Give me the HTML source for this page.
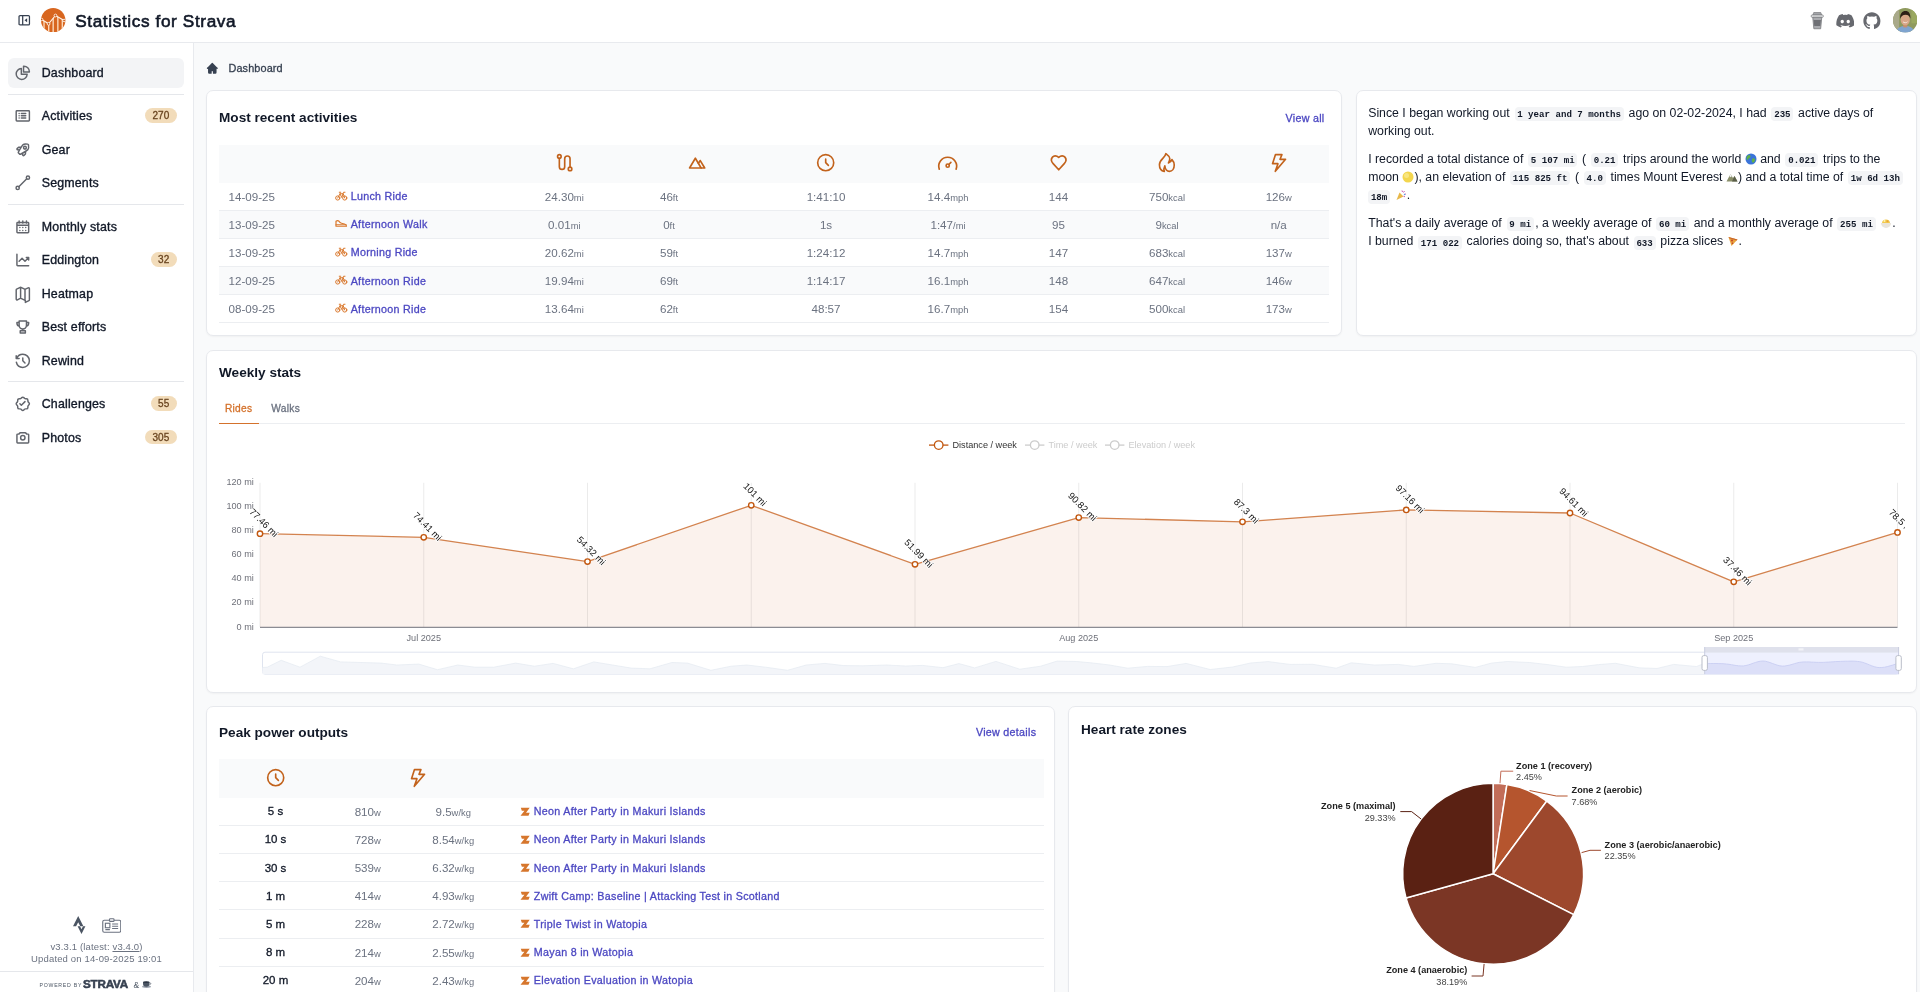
<!DOCTYPE html>
<html lang="en"><head><meta charset="utf-8"><title>Dashboard | Statistics for Strava</title>
<style>
*{box-sizing:border-box}
html,body{margin:0;padding:0}
body{will-change:transform;width:1920px;height:992px;overflow:hidden;background:#f9fafb;font-family:"Liberation Sans",sans-serif;color:#111827;position:relative;-webkit-font-smoothing:antialiased}
a{text-decoration:none;color:inherit}
.abs{position:absolute}
header{position:absolute;left:0;top:0;width:1920px;height:43px;background:#fff;border-bottom:1px solid #e8eaee}
aside{position:absolute;left:0;top:43px;width:194px;height:949px;background:#fff;border-right:1px solid #e8eaee}
.title{position:absolute;left:75.2px;top:8.6px;font-size:17.2px;letter-spacing:.62px;line-height:24px;color:#111827;white-space:nowrap;-webkit-text-stroke:.6px #111827}
.nav{position:absolute;left:8px;width:176px;height:30px;border-radius:6px;font-size:12.4px;color:#111827;line-height:30px;white-space:nowrap;-webkit-text-stroke:.35px #111827}
.nav svg{position:absolute;left:5.9px;top:6.2px;color:#62656c}
.nav .lbl{position:absolute;left:33.7px;top:0;letter-spacing:.18px}
.nav.active{background:#f3f4f6}
.badge{position:absolute;right:7.4px;top:7.2px;height:14.8px;line-height:15px;padding:0 7.4px;border-radius:8px;background:#f2dcba;color:#6a4520;font-size:10px;-webkit-text-stroke:.3px #6a4520}
.sep{position:absolute;left:8px;width:176px;height:1px;background:#e5e7eb}
.card{position:absolute;background:#fff;border:1px solid #e7e9ed;border-radius:7px;box-shadow:0 1px 2px rgba(0,0,0,.04)}
.h2{position:absolute;font-size:13.6px;font-weight:bold;color:#111827;white-space:nowrap;line-height:18px}
.link{color:#4c48c2}
.thead{position:absolute;background:#f9fafb}
.row{position:absolute;font-size:11.6px;color:#6b7280;line-height:27.2px;height:28.2px;border-bottom:1px solid #eceef1;white-space:nowrap}
.row.alt{background:#f9fafb}
.c{position:absolute;top:0;width:120px;margin-left:-60px;text-align:center}
.l{position:absolute;top:0}
.u{font-size:9.4px}
.ic{position:absolute}
.med{-webkit-text-stroke:.3px currentColor}
code{font-family:"Liberation Mono",monospace;font-weight:bold;font-size:9.12px;background:#f3f4f6;border-radius:4px;padding:1.5px 2.7px;margin:0 1.4px;color:#111827;white-space:nowrap}
.para{position:absolute;left:1368.2px;font-size:12.3px;line-height:18.3px;color:#111827;white-space:nowrap}
</style></head><body>

<header>
<svg class="abs" style="left:18.300px;top:14.300px" width="12.500" height="12.500" viewBox="0 0 24 24" fill="none" stroke="#374151" stroke-width="2.400" stroke-linejoin="round"><rect x="2" y="3" width="20" height="18" rx="2"/><path d="M9 3v18"/><path d="M17.500 8 12.500 12l5 4Z" fill="#374151" stroke="none"/></svg>
<svg class="abs" style="left:41.300px;top:8.100px" width="24.400" height="24.400" viewBox="0 0 48 48">
<defs><clipPath id="lc"><circle cx="24" cy="24" r="24"/></clipPath>
<clipPath id="lb"><path d="M-2 22.500 1.300 22.500 14.900 31.100 28.500 14.750 45.500 24.600 50 24.600V50H-2Z"/></clipPath></defs>
<circle cx="24" cy="24" r="24" fill="#d8661f"/>
<g clip-path="url(#lc)"><g clip-path="url(#lb)" fill="#fbd9bb">
<rect x="4.600" y="10" width="2.700" height="40"/><rect x="13.800" y="10" width="2.700" height="40"/><rect x="22.600" y="10" width="2.700" height="40"/><rect x="31.800" y="10" width="2.700" height="40"/><rect x="40.600" y="10" width="2.700" height="40"/>
</g>
<polyline points="1.300,22.500 14.900,31.100 28.500,14.750 45.500,24.600" fill="none" stroke="#fff3e6" stroke-width="2.300"/>
<g fill="#c9591a" stroke="#fff3e6" stroke-width="1.800"><circle cx="1.300" cy="22.500" r="2.500"/><circle cx="14.900" cy="31.100" r="2.700"/><circle cx="28.500" cy="14.750" r="2.700"/><circle cx="45.500" cy="24.600" r="2.500"/></g></g>
</svg>
<div class="title">Statistics for Strava</div>
<svg class="abs" style="left:1810px;top:11px" width="14.500" height="19" viewBox="0 0 29 38">
<path d="M7.500 3h14l2 5.500H5.500l2-5.500Z" fill="#a3a4a8" stroke="#7b7c80" stroke-width="1.400"/>
<rect x="2.500" y="8" width="24" height="4.500" rx="1.500" fill="#f6f6f7" stroke="#77787c" stroke-width="1.600"/>
<path d="M5.500 12.500h18l-2.200 23h-13.600L5.500 12.500Z" fill="#a9aaae" stroke="#77787c" stroke-width="1.600"/>
<path d="M7.200 18h14.600l-1.300 12H8.500L7.200 18Z" fill="#6f7075"/>
</svg>
<svg class="abs" style="left:1835.500px;top:14px" width="18.500" height="13.500" viewBox="0 0 24 18" fill="#67696f"><path d="M20.300 1.500A19.600 19.600 0 0 0 15.400 0c-.2.400-.5.900-.6 1.300a18.300 18.300 0 0 0-5.500 0C9.100.9 8.800.400 8.600 0A19.700 19.700 0 0 0 3.700 1.500C.600 6.100-.300 10.700.200 15.100a19.900 19.900 0 0 0 6 3c.5-.7.900-1.400 1.300-2.100-.7-.3-1.400-.6-2-1 .2-.1.300-.2.500-.4 3.900 1.800 8.200 1.800 12 0 .2.100.300.300.500.4-.6.400-1.300.7-2 1 .4.700.800 1.400 1.300 2.100a19.800 19.800 0 0 0 6-3c.6-5.200-.9-9.700-3.500-13.600ZM8 12.300c-1.200 0-2.200-1.100-2.200-2.400S6.800 7.500 8 7.500s2.200 1.100 2.200 2.400c0 1.300-1 2.400-2.200 2.400Zm8 0c-1.200 0-2.200-1.100-2.200-2.400s1-2.400 2.200-2.400 2.200 1.100 2.200 2.400c0 1.300-1 2.400-2.200 2.400Z"/></svg>
<svg class="abs" style="left:1863px;top:11.500px" width="17.800" height="17.800" viewBox="0 0 24 24" fill="#67696f"><path fill-rule="evenodd" d="M12 .5C5.650.5.500 5.650.500 12c0 5.080 3.290 9.390 7.860 10.910.570.110.790-.250.790-.550 0-.270-.010-1.170-.020-2.120-3.200.700-3.880-1.360-3.880-1.360-.520-1.330-1.280-1.680-1.280-1.680-1.040-.710.080-.700.080-.700 1.160.080 1.760 1.190 1.760 1.190 1.030 1.760 2.690 1.250 3.350.960.100-.740.400-1.250.730-1.540-2.550-.290-5.240-1.280-5.240-5.680 0-1.260.450-2.280 1.190-3.090-.120-.290-.510-1.460.110-3.040 0 0 .970-.310 3.170 1.180a11 11 0 0 1 5.760 0c2.200-1.490 3.160-1.180 3.160-1.180.630 1.580.230 2.750.110 3.040.740.810 1.190 1.830 1.190 3.090 0 4.410-2.690 5.380-5.250 5.670.410.360.780 1.060.780 2.130 0 1.540-.010 2.780-.010 3.160 0 .310.210.670.800.550A11.500 11.500 0 0 0 23.500 12C23.500 5.650 18.350.5 12 .5Z"/></svg>
<svg class="abs" style="left:1892.500px;top:8px" width="24.500" height="24.500" viewBox="0 0 48 48">
<defs><clipPath id="av"><circle cx="24" cy="24" r="24"/></clipPath></defs>
<g clip-path="url(#av)"><rect width="48" height="48" fill="#8f9a5e"/>
<rect x="0" y="0" width="12" height="48" fill="#a9a98a"/><rect x="36" y="0" width="12" height="30" fill="#9aa860"/>
<ellipse cx="24" cy="46" rx="17" ry="11" fill="#7fa4cf"/>
<rect x="20" y="28" width="8" height="10" fill="#c98f6d"/>
<ellipse cx="24" cy="23" rx="9" ry="11" fill="#d8a688"/><path d="M19.500 27c2.500 2.500 6.500 2.500 9 0" stroke="#f4e9e2" stroke-width="1.800" fill="none"/>
<path d="M14 21c-.500-10 4-15 10.500-15s10 5 9.500 15c-1.500-5.500-3.500-7.500-9.500-8-5 .5-8.500 2.500-10.500 8Z" fill="#2e1f17"/>
</g></svg>
</header>
<aside>
<a class="nav active" style="top:14.5px"><svg width="17.6" height="17.6" viewBox="0 0 24 24" overflow="visible" fill="none" stroke="currentColor" stroke-width="2" stroke-linecap="round" stroke-linejoin="round" ><path d="M10 6.025A7.5 7.5 0 1 0 17.975 14H10V6.025Z"/><path d="M13.5 3c-.169 0-.334.014-.5.025V11h7.975c.011-.166.025-.331.025-.5A7.5 7.5 0 0 0 13.5 3Z"/></svg><span class="lbl">Dashboard</span></a>
<a class="nav" style="top:58px"><svg width="17.6" height="17.6" viewBox="0 0 24 24" overflow="visible" fill="none" stroke="currentColor" stroke-width="2" stroke-linecap="round" stroke-linejoin="round" ><path d="M10 9h6m-6 3h6m-6 3h6M6.996 9h.01m-.01 3h.01m-.01 3h.01M4 5h16a1 1 0 0 1 1 1v12a1 1 0 0 1-1 1H4a1 1 0 0 1-1-1V6a1 1 0 0 1 1-1Z"/></svg><span class="lbl">Activities</span><span class="badge">270</span></a>
<a class="nav" style="top:91.5px"><svg width="17.6" height="17.6" viewBox="0 0 24 24" overflow="visible" fill="none" stroke="currentColor" stroke-width="2" stroke-linecap="round" stroke-linejoin="round" ><path d="m10.051 8.102-3.778.322-1.994 1.994a.94.94 0 0 0 .533 1.6l2.698.316m8.39 1.617-.322 3.78-1.994 1.994a.94.94 0 0 1-1.595-.533l-.4-2.652m8.166-11.174a1.366 1.366 0 0 0-1.12-1.12c-1.616-.279-4.906-.623-6.38.853-1.671 1.672-5.211 8.015-6.31 10.023a.932.932 0 0 0 .162 1.111l.828.835.833.832a.932.932 0 0 0 1.111.163c2.008-1.102 8.35-4.642 10.021-6.312 1.475-1.478 1.133-4.77.855-6.385Zm-2.961 3.722a1.88 1.88 0 1 1-3.76 0 1.88 1.88 0 0 1 3.76 0Z"/></svg><span class="lbl">Gear</span></a>
<a class="nav" style="top:125px"><svg width="17.6" height="17.6" viewBox="0 0 24 24" overflow="visible" fill="none" stroke="currentColor" stroke-width="2" stroke-linecap="round" stroke-linejoin="round" ><circle cx="5" cy="19" r="2.2"/><circle cx="19" cy="5" r="2.2"/><path d="M6.6 17.4 17.4 6.6"/></svg><span class="lbl">Segments</span></a>
<a class="nav" style="top:168.5px"><svg width="17.6" height="17.6" viewBox="0 0 24 24" overflow="visible" fill="none" stroke="currentColor" stroke-width="2" stroke-linecap="round" stroke-linejoin="round" ><path d="M4 10h16m-8-3V4M7 7V4m10 3V4M5 20h14a1 1 0 0 0 1-1V7a1 1 0 0 0-1-1H5a1 1 0 0 0-1 1v12a1 1 0 0 0 1 1Zm3-7h.01v.01H8V13Zm4 0h.01v.01H12V13Zm4 0h.01v.01H16V13Zm-8 4h.01v.01H8V17Zm4 0h.01v.01H12V17Zm4 0h.01v.01H16V17Z"/></svg><span class="lbl">Monthly stats</span></a>
<a class="nav" style="top:202px"><svg width="17.6" height="17.6" viewBox="0 0 24 24" overflow="visible" fill="none" stroke="currentColor" stroke-width="2" stroke-linecap="round" stroke-linejoin="round" ><path d="M4 4.5V19a1 1 0 0 0 1 1h15M7 14l4-4 4 4 5-5m0 0h-3.207M20 9v3.207"/></svg><span class="lbl">Eddington</span><span class="badge">32</span></a>
<a class="nav" style="top:235.5px"><svg width="17.6" height="17.6" viewBox="0 0 24 24" overflow="visible" fill="none" stroke="currentColor" stroke-width="2" stroke-linecap="round" stroke-linejoin="round" ><path d="M9 4V17.500m6-11v13.800m.503 3.498 4.875-2.437c.381-.190.622-.580.622-1.006V4.820c0-.836-.880-1.380-1.628-1.006l-3.869 1.934c-.317.159-.690.159-1.006 0L9.503 3.252a1.125 1.125 0 0 0-1.006 0L3.622 5.689C3.240 5.880 3 6.270 3 6.695V19.180c0 .836.880 1.380 1.628 1.006l3.869-1.934c.317-.159.690-.159 1.006 0l4.994 2.497c.317.158.690.158 1.006 0Z"/></svg><span class="lbl">Heatmap</span></a>
<a class="nav" style="top:269px"><svg width="17.6" height="17.6" viewBox="0 0 24 24" overflow="visible" fill="none" stroke="currentColor" stroke-width="2" stroke-linecap="round" stroke-linejoin="round" ><path d="M7 4h10v6a5 5 0 0 1-10 0V4Zm0 2H4v1a4 4 0 0 0 3.2 3.9M17 6h3v1a4 4 0 0 1-3.2 3.9M12 15v2.5M8.5 20.500h7v-3h-7v3Z"/></svg><span class="lbl">Best efforts</span></a>
<a class="nav" style="top:302.5px"><svg width="17.6" height="17.6" viewBox="0 0 24 24" overflow="visible" fill="none" stroke="currentColor" stroke-width="2" stroke-linecap="round" stroke-linejoin="round" ><path d="M12 8v4l3 3M3.223 14C4.132 18.008 7.717 21 12 21c4.97 0 9-4.03 9-9s-4.03-9-9-9c-3.729 0-6.929 2.268-8.294 5.5M7 9H3V5"/></svg><span class="lbl">Rewind</span></a>
<a class="nav" style="top:346px"><svg width="17.6" height="17.6" viewBox="0 0 24 24" overflow="visible" fill="none" stroke="currentColor" stroke-width="2" stroke-linecap="round" stroke-linejoin="round" ><path d="m8.032 12 1.984 1.984 4.96-4.96m4.55 5.272.893-.893a1.984 1.984 0 0 0 0-2.806l-.893-.893a1.984 1.984 0 0 1-.581-1.403V7.040a1.984 1.984 0 0 0-1.984-1.984h-1.262a1.983 1.983 0 0 1-1.403-.581l-.893-.893a1.984 1.984 0 0 0-2.806 0l-.893.893a1.984 1.984 0 0 1-1.403.581H7.040A1.984 1.984 0 0 0 5.055 7.040v1.262c0 .527-.209 1.031-.581 1.403l-.893.893a1.984 1.984 0 0 0 0 2.806l.893.893c.372.372.581.876.581 1.403v1.262a1.984 1.984 0 0 0 1.984 1.984h1.262c.527 0 1.031.209 1.403.581l.893.893a1.984 1.984 0 0 0 2.806 0l.893-.893a1.985 1.985 0 0 1 1.403-.581h1.262a1.984 1.984 0 0 0 1.984-1.984V15.700c0-.527.209-1.031.581-1.403Z"/></svg><span class="lbl">Challenges</span><span class="badge">55</span></a>
<a class="nav" style="top:379.5px"><svg width="17.6" height="17.6" viewBox="0 0 24 24" overflow="visible" fill="none" stroke="currentColor" stroke-width="2" stroke-linecap="round" stroke-linejoin="round" ><path d="M4 18V8a1 1 0 0 1 1-1h1.500l1.707-1.707A1 1 0 0 1 8.914 5h6.172a1 1 0 0 1 .707.293L17.500 7H19a1 1 0 0 1 1 1v10a1 1 0 0 1-1 1H5a1 1 0 0 1-1-1Z"/><path d="M15 12a3 3 0 1 1-6 0 3 3 0 0 1 6 0Z"/></svg><span class="lbl">Photos</span><span class="badge">305</span></a>
<div class="sep" style="top:50.599999999999994px"></div>
<div class="sep" style="top:160.8px"></div>
<div class="sep" style="top:338.4px"></div>
<svg class="abs" style="left:73px;top:873px" width="14" height="18" viewBox="0 0 14 18"><path d="M5.200 0 0 10.200h3.100l2.100-4 2.100 4h3.100L5.200 0Z" fill="#4b5563"/><path d="M10 10.200 8.500 13.200 7 10.200H4.600L8.500 18l3.900-7.800H10Z" fill="#4b5563"/></svg>
<svg class="abs" style="left:101.500px;top:874.5px" width="19.500" height="15" viewBox="0 0 26 20" fill="none" stroke="#6b7280" stroke-width="1.500"><rect x="1" y="3" width="24" height="16" rx="2"/><rect x="10" y="1" width="6" height="3.500" rx="1" fill="#fff"/><rect x="4.500" y="7" width="6" height="6"/><path d="M13.500 8h8m-8 3h8m-8 3h8M4.500 15.500h6"/></svg>
<div class="abs" style="left:0;width:193px;top:897.5px;text-align:center;font-size:9.5px;letter-spacing:.15px;line-height:12px;color:#6b7280;white-space:nowrap">v3.3.1 (latest: <span style="text-decoration:underline">v3.4.0</span>)<br>Updated on 14-09-2025 19:01</div>
<div class="abs" style="left:0;width:193px;top:928px;height:1px;background:#e5e7eb"></div>
<div class="abs" style="left:39.500px;top:938px;font-size:5.200px;letter-spacing:.75px;line-height:9px;color:#4b5563;white-space:nowrap">POWERED BY</div>
<div class="abs" style="left:82.500px;top:934.5px;font-size:10.800px;font-weight:bold;letter-spacing:-.2px;line-height:13px;color:#374151;white-space:nowrap;transform:scaleX(1.080);transform-origin:0 0;-webkit-text-stroke:.5px #374151">STRAVA</div>
<div class="abs" style="left:133.500px;top:935.5px;font-size:8.500px;line-height:12px;color:#4b5563">&amp;</div>
<svg class="abs" style="left:141.500px;top:937px" width="10" height="8" viewBox="0 0 20 16"><ellipse cx="9" cy="13.500" rx="9" ry="2.300" fill="#9ca3af"/><path d="M2 4h13v3a6.500 6.500 0 0 1-13 0V4Z" fill="#4b5563"/><ellipse cx="8.500" cy="4" rx="6.500" ry="1.600" fill="#1f2937"/><path d="M15 5.500c3-.5 3.500 3.500 0 4" fill="none" stroke="#4b5563" stroke-width="1.500"/></svg>
</aside>
<svg class="abs" style="left:204.900px;top:60.700px" width="14.600" height="14.600" viewBox="0 0 24 24" fill="#374151"><path fill-rule="evenodd" d="M11.293 3.293a1 1 0 0 1 1.414 0l6 6 2 2a1 1 0 0 1-1.414 1.414L19 12.414V19a2 2 0 0 1-2 2h-3a1 1 0 0 1-1-1v-3h-2v3a1 1 0 0 1-1 1H7a2 2 0 0 1-2-2v-6.586l-.293.293a1 1 0 0 1-1.414-1.414l2-2 6-6Z" clip-rule="evenodd"/></svg>
<div class="abs" style="left:228.500px;top:61px;font-size:10.900px;line-height:14px;color:#374151;letter-spacing:.1px;-webkit-text-stroke:.3px #374151">Dashboard</div>
<div class="card" style="left:206.25px;top:90px;width:1135.75px;height:246.25px"></div>
<div class="h2" style="left:219px;top:108.500px">Most recent activities</div>
<div class="abs link med" style="left:1285.500px;top:110.600px;font-size:10.700px;letter-spacing:.3px;line-height:14px;white-space:nowrap">View all</div>
<div class="thead" style="left:218.75px;top:145px;width:1110.5px;height:37.500px"></div>
<span class="ic" style="left:553.5999999999999px;top:152.3px;color:#c2621b"><svg width="21.4" height="21.4" viewBox="0 0 24 24" overflow="visible" fill="none" stroke="currentColor" stroke-width="1.85" stroke-linecap="round" stroke-linejoin="round" ><circle cx="6" cy="5" r="2"/><circle cx="18" cy="19" r="2"/><path d="M6 7v9.500a3 3 0 0 0 6 0v-9a3 3 0 0 1 6 0V17"/></svg></span>
<span class="ic" style="left:686.3px;top:152.3px;color:#c2621b"><svg width="21.4" height="21.4" viewBox="0 0 24 24" overflow="visible" fill="none" stroke="currentColor" stroke-width="1.85" stroke-linecap="round" stroke-linejoin="round" ><path d="M4 18 10.500 7 17 18Z"/><path d="M13.900 12.700 16 9.600 21 18h-4"/></svg></span>
<span class="ic" style="left:815.3px;top:152.3px;color:#c2621b"><svg width="21.4" height="21.4" viewBox="0 0 24 24" overflow="visible" fill="none" stroke="currentColor" stroke-width="1.85" stroke-linecap="round" stroke-linejoin="round" ><path d="M12 8v4l3 3m6-3a9 9 0 1 1-18 0 9 9 0 0 1 18 0Z"/></svg></span>
<span class="ic" style="left:937.3px;top:152.3px;color:#c2621b"><svg width="21.4" height="21.4" viewBox="0 0 24 24" overflow="visible" fill="none" stroke="currentColor" stroke-width="1.85" stroke-linecap="round" stroke-linejoin="round" ><path d="M2.550 19.200A10 10 0 1 1 21.450 19.200"/><circle cx="12" cy="15.300" r="1.800"/><path d="M13.300 14 15.600 11.700"/></svg></span>
<span class="ic" style="left:1047.8px;top:152.3px;color:#c2621b"><svg width="21.4" height="21.4" viewBox="0 0 24 24" overflow="visible" fill="none" stroke="currentColor" stroke-width="1.85" stroke-linecap="round" stroke-linejoin="round" ><path d="M12.010 6.001C6.500 1 1 8 5.782 13.001L12.011 20l6.230-7C23 8 17.500 1 12.010 6.002Z"/></svg></span>
<span class="ic" style="left:1156.3px;top:152.3px;color:#c2621b"><svg width="21.4" height="21.4" viewBox="0 0 24 24" overflow="visible" fill="none" stroke="currentColor" stroke-width="1.85" stroke-linecap="round" stroke-linejoin="round" ><path d="M11.050 1.900C12.500 3 15.200 4.800 15.450 7.300C15.600 9.500 14.600 11 14 12.250C15.800 11.800 17.300 10.400 17.900 8.500C19.500 10.200 20.450 12 20.450 14.500C20.450 18.800 18.300 21.800 15 21.800C12.500 21.800 10.200 19.300 9.900 15.600C8.900 17.500 8.700 19.800 9.300 21.900C5.800 21 3.850 18.300 3.850 14.200C3.850 10.800 6 8.800 7.900 6.900C9.400 5.400 10.600 3.800 11.050 1.900Z"/></svg></span>
<span class="ic" style="left:1268.0px;top:152.3px;color:#c2621b"><svg width="21.4" height="21.4" viewBox="0 0 24 24" overflow="visible" fill="none" stroke="currentColor" stroke-width="1.85" stroke-linecap="round" stroke-linejoin="round" ><path d="M8.400 2.900h7.200l-2.100 5.300h6.200L8.200 21.600l3-8.500H5.100Z"/></svg></span>
<div class="row" style="left:218.75px;top:182.60px;width:1110.5px"><span class="l" style="left:9.75px">14-09-25</span><svg class="abs" style="left:116.25px;top:8.3px" width="12.500" height="10" viewBox="0 0 25 20" fill="none" stroke="#d9782d" stroke-width="2" stroke-linecap="round" stroke-linejoin="round"><circle cx="5.500" cy="14" r="4.200"/><circle cx="19.500" cy="14" r="4.200"/><path d="M5.500 14 10 5.500h6.500L19.500 14M8.500 2.500h3M10 5.500 13.500 13 17 2.500h3"/></svg><span class="l link med" style="left:131.95px;top:.6px;font-size:10.700px;letter-spacing:.3px">Lunch Ride</span><span class="c" style="left:345.54999999999995px">24.30<span class="u">mi</span></span><span class="c" style="left:450.25px">46<span class="u">ft</span></span><span class="c" style="left:607.25px">1:41:10</span><span class="c" style="left:729.25px">14.4<span class="u">mph</span></span><span class="c" style="left:839.75px">144</span><span class="c" style="left:948.25px">750<span class="u">kcal</span></span><span class="c" style="left:1059.95px">126<span class="u">w</span></span></div>
<div class="row alt" style="left:218.75px;top:210.75px;width:1110.5px"><span class="l" style="left:9.75px">13-09-25</span><svg class="abs" style="left:116.25px;top:8.3px" width="12.500" height="10" viewBox="0 0 25 20" fill="none" stroke="#d9782d" stroke-width="2.400" stroke-linecap="round" stroke-linejoin="round"><path d="M2 4.500c2-1.500 4.500-1.500 6 0 1 2 2.500 3.500 5 4l6 1.500c2.500.600 4 2 4 4.500H2V4.500Z"/><path d="M2 11.500h20"/></svg><span class="l link med" style="left:131.95px;top:.6px;font-size:10.700px;letter-spacing:.3px">Afternoon Walk</span><span class="c" style="left:345.54999999999995px">0.01<span class="u">mi</span></span><span class="c" style="left:450.25px">0<span class="u">ft</span></span><span class="c" style="left:607.25px">1s</span><span class="c" style="left:729.25px">1:47<span class="u">/mi</span></span><span class="c" style="left:839.75px">95</span><span class="c" style="left:948.25px">9<span class="u">kcal</span></span><span class="c" style="left:1059.95px">n/a</span></div>
<div class="row" style="left:218.75px;top:238.90px;width:1110.5px"><span class="l" style="left:9.75px">13-09-25</span><svg class="abs" style="left:116.25px;top:8.3px" width="12.500" height="10" viewBox="0 0 25 20" fill="none" stroke="#d9782d" stroke-width="2" stroke-linecap="round" stroke-linejoin="round"><circle cx="5.500" cy="14" r="4.200"/><circle cx="19.500" cy="14" r="4.200"/><path d="M5.500 14 10 5.500h6.500L19.500 14M8.500 2.500h3M10 5.500 13.500 13 17 2.500h3"/></svg><span class="l link med" style="left:131.95px;top:.6px;font-size:10.700px;letter-spacing:.3px">Morning Ride</span><span class="c" style="left:345.54999999999995px">20.62<span class="u">mi</span></span><span class="c" style="left:450.25px">59<span class="u">ft</span></span><span class="c" style="left:607.25px">1:24:12</span><span class="c" style="left:729.25px">14.7<span class="u">mph</span></span><span class="c" style="left:839.75px">147</span><span class="c" style="left:948.25px">683<span class="u">kcal</span></span><span class="c" style="left:1059.95px">137<span class="u">w</span></span></div>
<div class="row alt" style="left:218.75px;top:267.05px;width:1110.5px"><span class="l" style="left:9.75px">12-09-25</span><svg class="abs" style="left:116.25px;top:8.3px" width="12.500" height="10" viewBox="0 0 25 20" fill="none" stroke="#d9782d" stroke-width="2" stroke-linecap="round" stroke-linejoin="round"><circle cx="5.500" cy="14" r="4.200"/><circle cx="19.500" cy="14" r="4.200"/><path d="M5.500 14 10 5.500h6.500L19.500 14M8.500 2.500h3M10 5.500 13.500 13 17 2.500h3"/></svg><span class="l link med" style="left:131.95px;top:.6px;font-size:10.700px;letter-spacing:.3px">Afternoon Ride</span><span class="c" style="left:345.54999999999995px">19.94<span class="u">mi</span></span><span class="c" style="left:450.25px">69<span class="u">ft</span></span><span class="c" style="left:607.25px">1:14:17</span><span class="c" style="left:729.25px">16.1<span class="u">mph</span></span><span class="c" style="left:839.75px">148</span><span class="c" style="left:948.25px">647<span class="u">kcal</span></span><span class="c" style="left:1059.95px">146<span class="u">w</span></span></div>
<div class="row" style="left:218.75px;top:295.20px;width:1110.5px"><span class="l" style="left:9.75px">08-09-25</span><svg class="abs" style="left:116.25px;top:8.3px" width="12.500" height="10" viewBox="0 0 25 20" fill="none" stroke="#d9782d" stroke-width="2" stroke-linecap="round" stroke-linejoin="round"><circle cx="5.500" cy="14" r="4.200"/><circle cx="19.500" cy="14" r="4.200"/><path d="M5.500 14 10 5.500h6.500L19.500 14M8.500 2.500h3M10 5.500 13.500 13 17 2.500h3"/></svg><span class="l link med" style="left:131.95px;top:.6px;font-size:10.700px;letter-spacing:.3px">Afternoon Ride</span><span class="c" style="left:345.54999999999995px">13.64<span class="u">mi</span></span><span class="c" style="left:450.25px">62<span class="u">ft</span></span><span class="c" style="left:607.25px">48:57</span><span class="c" style="left:729.25px">16.7<span class="u">mph</span></span><span class="c" style="left:839.75px">154</span><span class="c" style="left:948.25px">500<span class="u">kcal</span></span><span class="c" style="left:1059.95px">173<span class="u">w</span></span></div>
<div class="card" style="left:1355.5px;top:90px;width:561.5px;height:246.25px"></div>
<div class="para" style="top:103.8px">Since I began working out <code>1 year and 7 months</code> ago on 02-02-2024, I had <code>235</code> active days of</div>
<div class="para" style="top:122.1px">working out.</div>
<div class="para" style="top:149.9px">I recorded a total distance of <code>5 107 mi</code> ( <code>0.21</code> trips around the world <svg style="vertical-align:-2px" width="12" height="12" viewBox="0 0 24 24"><circle cx="12" cy="12" r="11" fill="#3b74d9"/><path d="M6 5c3-2 6 0 5 3s-4 2-5 5-3 0-3-3 1-4 3-5Zm9 6c3-1 6 1 5 4s-3 5-5 4-2-7 0-8Z" fill="#5fb04a"/></svg> and <code>0.021</code> trips to the</div>
<div class="para" style="top:167.7px">moon <svg style="vertical-align:-2px" width="12" height="12" viewBox="0 0 24 24"><circle cx="12" cy="12" r="11" fill="#f3d64e"/><circle cx="9" cy="9" r="5" fill="#f9e98c" opacity=".8"/></svg>), an elevation of <code>115 825 ft</code> ( <code>4.0</code> times Mount Everest <svg style="vertical-align:-2px" width="12" height="12" viewBox="0 0 24 24"><path d="M1 21 9 6l5 8 3-4 6 11Z" fill="#8a8f6a"/><path d="M9 6l2.500 4.500-2.500 2-2.300-2.300Z" fill="#f3f4f6"/><path d="M12 21l5-11 6 11Z" fill="#5b5f4a"/></svg>) and a total time of <code>1w 6d 13h</code></div>
<div class="para" style="top:186.0px"><code style="margin-left:0">18m</code> <svg style="vertical-align:-2px" width="12" height="12" viewBox="0 0 24 24"><path d="M3 22 9 7l8 8Z" fill="#e8b84a"/><path d="M14 3l1 3m4-2-2 3m5 3-3 .5m1 5-3-1" stroke="#c95fb0" stroke-width="2" fill="none"/><circle cx="19" cy="11" r="1.300" fill="#4aa3e8"/></svg>.</div>
<div class="para" style="top:213.8px">That's a daily average of <code>9 mi</code>, a weekly average of <code>60 mi</code> and a monthly average of <code>255 mi</code> <svg style="vertical-align:-2px" width="12" height="12" viewBox="0 0 24 24"><path d="M2 12h20a10 10 0 0 1-20 0Z" fill="#e9e4da"/><path d="M4 12c0-5 4-7 8-7s8 2 8 7Z" fill="#f2c94c"/><circle cx="9" cy="8" r="2" fill="#fff3b0"/><circle cx="15" cy="8.500" r="2" fill="#e8a23a"/></svg>.</div>
<div class="para" style="top:232.2px">I burned <code>171 022</code> calories doing so, that's about <code>633</code> pizza slices <svg style="vertical-align:-2px" width="12" height="12" viewBox="0 0 24 24"><path d="M3 4 21 9 9 22Z" fill="#e9a23b"/><path d="M3 4 21 9l-1.500 2L4.500 6.500Z" fill="#c7652c"/><circle cx="10" cy="11" r="1.800" fill="#c0392b"/><circle cx="11" cy="16.500" r="1.500" fill="#c0392b"/></svg>.</div>
<div class="card" style="left:206.25px;top:350px;width:1710.75px;height:343px"></div>
<div class="h2" style="left:219px;top:364px">Weekly stats</div>
<div class="abs" style="left:218.75px;top:423.300px;width:1685.75px;height:1px;background:#eceef1"></div>
<div class="abs" style="left:218.75px;top:422.500px;width:40px;height:1.800px;background:#d4722c"></div>
<div class="abs med" style="left:224.900px;top:402.200px;font-size:10.200px;letter-spacing:.28px;line-height:14px;color:#d4722c">Rides</div>
<div class="abs med" style="left:271.300px;top:402.200px;font-size:10.200px;letter-spacing:.28px;line-height:14px;color:#6b7280">Walks</div>
<svg class="abs" style="left:0;top:0;overflow:visible" width="1920" height="992" viewBox="0 0 1920 992" font-family="Liberation Sans, sans-serif">
<path d="M929 445.100h19.400" stroke="#c2570f" stroke-width="1.300"/><circle cx="938.7" cy="445.100" r="4.300" fill="#fff" stroke="#c2570f" stroke-width="1.300"/><text x="952.5" y="448.400" font-size="9.150" fill="#333">Distance / week</text>
<path d="M1025 445.100h19.400" stroke="#ccc" stroke-width="1.300"/><circle cx="1034.7" cy="445.100" r="4.300" fill="#fff" stroke="#ccc" stroke-width="1.300"/><text x="1048.5" y="448.400" font-size="9.150" fill="#ccc">Time / week</text>
<path d="M1105 445.100h19.400" stroke="#ccc" stroke-width="1.300"/><circle cx="1114.7" cy="445.100" r="4.300" fill="#fff" stroke="#ccc" stroke-width="1.300"/><text x="1128.5" y="448.400" font-size="9.150" fill="#ccc">Elevation / week</text>
<text x="253.800" y="629.5" font-size="9.150" fill="#6E7079" text-anchor="end">0 mi</text>
<text x="253.800" y="605.4" font-size="9.150" fill="#6E7079" text-anchor="end">20 mi</text>
<text x="253.800" y="581.3" font-size="9.150" fill="#6E7079" text-anchor="end">40 mi</text>
<text x="253.800" y="557.2" font-size="9.150" fill="#6E7079" text-anchor="end">60 mi</text>
<text x="253.800" y="533.1" font-size="9.150" fill="#6E7079" text-anchor="end">80 mi</text>
<text x="253.800" y="509.0" font-size="9.150" fill="#6E7079" text-anchor="end">100 mi</text>
<text x="253.800" y="484.9" font-size="9.150" fill="#6E7079" text-anchor="end">120 mi</text>
<polygon points="260.0,627.0 260.00,533.66 423.75,537.34 587.50,561.54 751.25,505.29 915.00,564.35 1078.75,517.56 1242.50,521.80 1406.25,509.92 1570.00,512.99 1733.75,581.86 1897.50,532.41 1897.50,627.0" fill="#fbf2ed"/>
<path d="M260.00 482.800V627.0" stroke="#000" stroke-opacity=".08" stroke-width="1"/>
<path d="M423.75 482.800V627.0" stroke="#000" stroke-opacity=".08" stroke-width="1"/>
<path d="M587.50 482.800V627.0" stroke="#000" stroke-opacity=".08" stroke-width="1"/>
<path d="M751.25 482.800V627.0" stroke="#000" stroke-opacity=".08" stroke-width="1"/>
<path d="M915.00 482.800V627.0" stroke="#000" stroke-opacity=".08" stroke-width="1"/>
<path d="M1078.75 482.800V627.0" stroke="#000" stroke-opacity=".08" stroke-width="1"/>
<path d="M1242.50 482.800V627.0" stroke="#000" stroke-opacity=".08" stroke-width="1"/>
<path d="M1406.25 482.800V627.0" stroke="#000" stroke-opacity=".08" stroke-width="1"/>
<path d="M1570.00 482.800V627.0" stroke="#000" stroke-opacity=".08" stroke-width="1"/>
<path d="M1733.75 482.800V627.0" stroke="#000" stroke-opacity=".08" stroke-width="1"/>
<path d="M1897.50 482.800V627.0" stroke="#000" stroke-opacity=".08" stroke-width="1"/>
<polyline points="260.00,533.66 423.75,537.34 587.50,561.54 751.25,505.29 915.00,564.35 1078.75,517.56 1242.50,521.80 1406.25,509.92 1570.00,512.99 1733.75,581.86 1897.50,532.41" fill="none" stroke="#d3834f" stroke-width="1.300" stroke-linejoin="round"/>
<path d="M260.0 627.3H1897.50" stroke="#6E7079" stroke-width="1"/>
<text x="423.75" y="640.900" font-size="9.150" fill="#6E7079" text-anchor="middle">Jul 2025</text>
<text x="1078.75" y="640.900" font-size="9.150" fill="#6E7079" text-anchor="middle">Aug 2025</text>
<text x="1733.75" y="640.900" font-size="9.150" fill="#6E7079" text-anchor="middle">Sep 2025</text>
<defs><clipPath id="cclip"><rect x="206" y="430" width="1698.800" height="260"/></clipPath></defs><g clip-path="url(#cclip)">
<circle cx="260.00" cy="533.66" r="2.700" fill="#fff" stroke="#c2570f" stroke-width="1.400"/>
<circle cx="423.75" cy="537.34" r="2.700" fill="#fff" stroke="#c2570f" stroke-width="1.400"/>
<circle cx="587.50" cy="561.54" r="2.700" fill="#fff" stroke="#c2570f" stroke-width="1.400"/>
<circle cx="751.25" cy="505.29" r="2.700" fill="#fff" stroke="#c2570f" stroke-width="1.400"/>
<circle cx="915.00" cy="564.35" r="2.700" fill="#fff" stroke="#c2570f" stroke-width="1.400"/>
<circle cx="1078.75" cy="517.56" r="2.700" fill="#fff" stroke="#c2570f" stroke-width="1.400"/>
<circle cx="1242.50" cy="521.80" r="2.700" fill="#fff" stroke="#c2570f" stroke-width="1.400"/>
<circle cx="1406.25" cy="509.92" r="2.700" fill="#fff" stroke="#c2570f" stroke-width="1.400"/>
<circle cx="1570.00" cy="512.99" r="2.700" fill="#fff" stroke="#c2570f" stroke-width="1.400"/>
<circle cx="1733.75" cy="581.86" r="2.700" fill="#fff" stroke="#c2570f" stroke-width="1.400"/>
<circle cx="1897.50" cy="532.41" r="2.700" fill="#fff" stroke="#c2570f" stroke-width="1.400"/>
<text transform="translate(260.00 526.66) rotate(45)" y="-2.200" font-size="9.400" fill="#111" text-anchor="middle" stroke="#fff" stroke-width="1.600" stroke-linejoin="round" paint-order="stroke">77.46 mi</text>
<text transform="translate(423.75 530.34) rotate(45)" y="-2.200" font-size="9.400" fill="#111" text-anchor="middle" stroke="#fff" stroke-width="1.600" stroke-linejoin="round" paint-order="stroke">74.41 mi</text>
<text transform="translate(587.50 554.54) rotate(45)" y="-2.200" font-size="9.400" fill="#111" text-anchor="middle" stroke="#fff" stroke-width="1.600" stroke-linejoin="round" paint-order="stroke">54.32 mi</text>
<text transform="translate(751.25 498.29) rotate(45)" y="-2.200" font-size="9.400" fill="#111" text-anchor="middle" stroke="#fff" stroke-width="1.600" stroke-linejoin="round" paint-order="stroke">101 mi</text>
<text transform="translate(915.00 557.35) rotate(45)" y="-2.200" font-size="9.400" fill="#111" text-anchor="middle" stroke="#fff" stroke-width="1.600" stroke-linejoin="round" paint-order="stroke">51.99 mi</text>
<text transform="translate(1078.75 510.56) rotate(45)" y="-2.200" font-size="9.400" fill="#111" text-anchor="middle" stroke="#fff" stroke-width="1.600" stroke-linejoin="round" paint-order="stroke">90.82 mi</text>
<text transform="translate(1242.50 514.80) rotate(45)" y="-2.200" font-size="9.400" fill="#111" text-anchor="middle" stroke="#fff" stroke-width="1.600" stroke-linejoin="round" paint-order="stroke">87.3 mi</text>
<text transform="translate(1406.25 502.92) rotate(45)" y="-2.200" font-size="9.400" fill="#111" text-anchor="middle" stroke="#fff" stroke-width="1.600" stroke-linejoin="round" paint-order="stroke">97.16 mi</text>
<text transform="translate(1570.00 505.99) rotate(45)" y="-2.200" font-size="9.400" fill="#111" text-anchor="middle" stroke="#fff" stroke-width="1.600" stroke-linejoin="round" paint-order="stroke">94.61 mi</text>
<text transform="translate(1733.75 574.86) rotate(45)" y="-2.200" font-size="9.400" fill="#111" text-anchor="middle" stroke="#fff" stroke-width="1.600" stroke-linejoin="round" paint-order="stroke">37.46 mi</text>
<text transform="translate(1897.50 525.41) rotate(45)" y="-2.200" font-size="9.400" fill="#111" text-anchor="middle" stroke="#fff" stroke-width="1.600" stroke-linejoin="round" paint-order="stroke">78.5 mi</text>
</g>
<rect x="262.5" y="652.2" width="1636.1" height="22.0" rx="2.500" fill="#fff" stroke="#dfe4ef" stroke-width="1"/>
<polygon points="262.5,674.2 262.5,667.5 267.2,667.2 281.2,660.3 300.0,667.2 320.3,656.2 340.6,661.9 381.2,663.1 396.9,665.0 418.8,664.1 437.5,669.7 457.8,665.0 475.0,667.2 493.8,667.2 515.6,663.1 534.4,666.2 553.1,663.4 573.4,668.8 593.8,661.9 612.5,665.0 631.2,668.1 650.0,668.8 671.9,662.5 687.5,663.1 710.9,670.3 731.2,666.2 746.9,665.0 765.6,667.2 787.5,670.3 806.2,665.0 825.0,663.4 843.8,665.6 862.8,665.8 886.1,665.0 905.7,666.0 922.4,665.4 943.0,667.7 958.9,663.6 974.7,667.9 995.9,661.4 1019.8,669.2 1040.7,666.2 1057.1,661.1 1076.8,661.5 1093.6,663.1 1108.8,664.9 1127.8,668.2 1147.5,666.4 1167.0,666.6 1186.1,663.4 1210.1,669.5 1232.6,667.0 1250.5,663.0 1268.1,661.6 1290.0,664.4 1312.6,664.3 1336.2,668.2 1351.2,662.8 1374.4,665.0 1398.2,664.4 1413.9,666.4 1435.9,663.3 1451.7,663.8 1475.3,667.4 1491.4,663.1 1507.3,661.5 1529.5,662.5 1549.5,664.8 1566.2,667.2 1582.4,666.5 1598.5,664.6 1615.4,663.3 1639.1,667.8 1656.9,668.5 1673.7,664.4 1696.4,666.5 1704.7,663.4 1724.1,663.8 1743.5,665.9 1762.9,661.0 1782.3,666.1 1801.7,662.1 1821.0,662.4 1840.4,661.4 1859.8,661.7 1879.2,667.6 1898.6,663.3 1898.6,674.2" fill="#f3f5f9"/>
<polyline points="262.5,667.5 267.2,667.2 281.2,660.3 300.0,667.2 320.3,656.2 340.6,661.9 381.2,663.1 396.9,665.0 418.8,664.1 437.5,669.7 457.8,665.0 475.0,667.2 493.8,667.2 515.6,663.1 534.4,666.2 553.1,663.4 573.4,668.8 593.8,661.9 612.5,665.0 631.2,668.1 650.0,668.8 671.9,662.5 687.5,663.1 710.9,670.3 731.2,666.2 746.9,665.0 765.6,667.2 787.5,670.3 806.2,665.0 825.0,663.4 843.8,665.6 862.8,665.8 886.1,665.0 905.7,666.0 922.4,665.4 943.0,667.7 958.9,663.6 974.7,667.9 995.9,661.4 1019.8,669.2 1040.7,666.2 1057.1,661.1 1076.8,661.5 1093.6,663.1 1108.8,664.9 1127.8,668.2 1147.5,666.4 1167.0,666.6 1186.1,663.4 1210.1,669.5 1232.6,667.0 1250.5,663.0 1268.1,661.6 1290.0,664.4 1312.6,664.3 1336.2,668.2 1351.2,662.8 1374.4,665.0 1398.2,664.4 1413.9,666.4 1435.9,663.3 1451.7,663.8 1475.3,667.4 1491.4,663.1 1507.3,661.5 1529.5,662.5 1549.5,664.8 1566.2,667.2 1582.4,666.5 1598.5,664.6 1615.4,663.3 1639.1,667.8 1656.9,668.5 1673.7,664.4 1696.4,666.5 1704.7,663.4 1724.1,663.8 1743.5,665.9 1762.9,661.0 1782.3,666.1 1801.7,662.1 1821.0,662.4 1840.4,661.4 1859.8,661.7 1879.2,667.6 1898.6,663.3" fill="none" stroke="#e4e9f1" stroke-width=".7"/>
<rect x="1704.7" y="652.2" width="193.89999999999986" height="22.0" fill="#eef0fe"/>
<polygon points="1704.7,674.2 1704.7,663.4 1706.2,663.5 1708.2,663.5 1710.6,663.5 1713.2,663.5 1716.0,663.5 1718.8,663.6 1721.5,663.6 1724.1,663.8 1726.5,664.0 1728.9,664.3 1731.4,664.7 1733.8,665.1 1736.2,665.5 1738.6,665.8 1741.1,665.9 1743.5,665.9 1745.9,665.5 1748.3,664.9 1750.8,664.1 1753.2,663.2 1755.6,662.4 1758.0,661.7 1760.4,661.2 1762.9,661.0 1765.3,661.2 1767.7,661.8 1770.1,662.6 1772.6,663.5 1775.0,664.4 1777.4,665.2 1779.8,665.8 1782.3,666.1 1784.7,666.0 1787.1,665.6 1789.5,665.1 1792.0,664.4 1794.4,663.7 1796.8,663.0 1799.2,662.4 1801.7,662.1 1804.1,661.9 1806.5,661.9 1808.9,661.9 1811.3,662.1 1813.8,662.2 1816.2,662.3 1818.6,662.4 1821.0,662.4 1823.5,662.4 1825.9,662.2 1828.3,662.1 1830.7,661.9 1833.2,661.8 1835.6,661.6 1838.0,661.5 1840.4,661.4 1842.9,661.3 1845.3,661.2 1847.7,661.2 1850.1,661.1 1852.5,661.1 1855.0,661.2 1857.4,661.4 1859.8,661.7 1862.2,662.2 1864.7,663.0 1867.1,663.9 1869.5,664.9 1871.9,665.9 1874.4,666.7 1876.8,667.3 1879.2,667.6 1881.8,667.5 1884.5,667.2 1887.3,666.6 1890.1,665.8 1892.7,665.1 1895.1,664.3 1897.1,663.7 1898.6,663.3 1898.6,674.2" fill="#dcdff8"/>
<polyline points="1704.7,663.4 1706.2,663.5 1708.2,663.5 1710.6,663.5 1713.2,663.5 1716.0,663.5 1718.8,663.6 1721.5,663.6 1724.1,663.8 1726.5,664.0 1728.9,664.3 1731.4,664.7 1733.8,665.1 1736.2,665.5 1738.6,665.8 1741.1,665.9 1743.5,665.9 1745.9,665.5 1748.3,664.9 1750.8,664.1 1753.2,663.2 1755.6,662.4 1758.0,661.7 1760.4,661.2 1762.9,661.0 1765.3,661.2 1767.7,661.8 1770.1,662.6 1772.6,663.5 1775.0,664.4 1777.4,665.2 1779.8,665.8 1782.3,666.1 1784.7,666.0 1787.1,665.6 1789.5,665.1 1792.0,664.4 1794.4,663.7 1796.8,663.0 1799.2,662.4 1801.7,662.1 1804.1,661.9 1806.5,661.9 1808.9,661.9 1811.3,662.1 1813.8,662.2 1816.2,662.3 1818.6,662.4 1821.0,662.4 1823.5,662.4 1825.9,662.2 1828.3,662.1 1830.7,661.9 1833.2,661.8 1835.6,661.6 1838.0,661.5 1840.4,661.4 1842.9,661.3 1845.3,661.2 1847.7,661.2 1850.1,661.1 1852.5,661.1 1855.0,661.2 1857.4,661.4 1859.8,661.7 1862.2,662.2 1864.7,663.0 1867.1,663.9 1869.5,664.9 1871.9,665.9 1874.4,666.7 1876.8,667.3 1879.2,667.6 1881.8,667.5 1884.5,667.2 1887.3,666.6 1890.1,665.8 1892.7,665.1 1895.1,664.3 1897.1,663.7 1898.6,663.3" fill="none" stroke="#c5caf1" stroke-width=".8"/>
<rect x="1704.7" y="647" width="193.89999999999986" height="5.500" fill="#dfe1ec"/>
<rect x="1798.500" y="648.300" width="5" height="2.200" fill="#f1f2f7"/>
<path d="M1704.7 647V674.2M1898.6 647V674.2" stroke="#c9cde0" stroke-width="1"/>
<rect x="1702.0" y="655.600" width="5.400" height="14.800" rx="1.800" fill="#fff" stroke="#b9bdc9" stroke-width="1"/>
<rect x="1895.8999999999999" y="655.600" width="5.400" height="14.800" rx="1.800" fill="#fff" stroke="#b9bdc9" stroke-width="1"/>
</svg>
<div class="card" style="left:206.25px;top:706.25px;width:848.75px;height:320px"></div>
<div class="h2" style="left:219px;top:723.500px">Peak power outputs</div>
<div class="abs link med" style="left:975.900px;top:725.300px;font-size:10.700px;letter-spacing:.3px;line-height:14px;white-space:nowrap">View details</div>
<div class="thead" style="left:218.75px;top:759px;width:825.25px;height:38.500px"></div>
<span class="ic" style="left:264.7px;top:767.3px;color:#c2621b"><svg width="21.4" height="21.4" viewBox="0 0 24 24" overflow="visible" fill="none" stroke="currentColor" stroke-width="1.85" stroke-linecap="round" stroke-linejoin="round" ><path d="M12 8v4l3 3m6-3a9 9 0 1 1-18 0 9 9 0 0 1 18 0Z"/></svg></span>
<span class="ic" style="left:406.8px;top:767.3px;color:#c2621b"><svg width="21.4" height="21.4" viewBox="0 0 24 24" overflow="visible" fill="none" stroke="currentColor" stroke-width="1.85" stroke-linecap="round" stroke-linejoin="round" ><path d="M8.400 2.900h7.200l-2.100 5.300h6.200L8.200 21.600l3-8.500H5.100Z"/></svg></span>
<div class="row" style="left:218.75px;top:797.60px;width:825.25px"><span class="c med" style="left:56.75px;top:.7px;color:#111827;font-size:11.500px">5 s</span><span class="c" style="left:148.95px">810<span class="u">w</span></span><span class="c" style="left:234.45px">9.5<span class="u">w/kg</span></span><svg class="abs" style="left:301.54999999999995px;top:9.1px" width="10.500" height="9.400" viewBox="0 0 20 20" preserveAspectRatio="none"><path d="M1.500 1.500h17L11.500 12h7l-2.300 6.500H1L8.500 8H3.500L1.500 1.500Z" fill="#d6762c"/></svg><span class="l link med" style="left:315.04999999999995px;top:.6px;font-size:10.700px;letter-spacing:.3px">Neon After Party in Makuri Islands</span></div>
<div class="row" style="left:218.75px;top:825.80px;width:825.25px"><span class="c med" style="left:56.75px;top:.7px;color:#111827;font-size:11.500px">10 s</span><span class="c" style="left:148.95px">728<span class="u">w</span></span><span class="c" style="left:234.45px">8.54<span class="u">w/kg</span></span><svg class="abs" style="left:301.54999999999995px;top:9.1px" width="10.500" height="9.400" viewBox="0 0 20 20" preserveAspectRatio="none"><path d="M1.500 1.500h17L11.500 12h7l-2.300 6.500H1L8.500 8H3.500L1.500 1.500Z" fill="#d6762c"/></svg><span class="l link med" style="left:315.04999999999995px;top:.6px;font-size:10.700px;letter-spacing:.3px">Neon After Party in Makuri Islands</span></div>
<div class="row" style="left:218.75px;top:854.00px;width:825.25px"><span class="c med" style="left:56.75px;top:.7px;color:#111827;font-size:11.500px">30 s</span><span class="c" style="left:148.95px">539<span class="u">w</span></span><span class="c" style="left:234.45px">6.32<span class="u">w/kg</span></span><svg class="abs" style="left:301.54999999999995px;top:9.1px" width="10.500" height="9.400" viewBox="0 0 20 20" preserveAspectRatio="none"><path d="M1.500 1.500h17L11.500 12h7l-2.300 6.500H1L8.500 8H3.500L1.500 1.500Z" fill="#d6762c"/></svg><span class="l link med" style="left:315.04999999999995px;top:.6px;font-size:10.700px;letter-spacing:.3px">Neon After Party in Makuri Islands</span></div>
<div class="row" style="left:218.75px;top:882.20px;width:825.25px"><span class="c med" style="left:56.75px;top:.7px;color:#111827;font-size:11.500px">1 m</span><span class="c" style="left:148.95px">414<span class="u">w</span></span><span class="c" style="left:234.45px">4.93<span class="u">w/kg</span></span><svg class="abs" style="left:301.54999999999995px;top:9.1px" width="10.500" height="9.400" viewBox="0 0 20 20" preserveAspectRatio="none"><path d="M1.500 1.500h17L11.500 12h7l-2.300 6.500H1L8.500 8H3.500L1.500 1.500Z" fill="#d6762c"/></svg><span class="l link med" style="left:315.04999999999995px;top:.6px;font-size:10.700px;letter-spacing:.3px">Zwift Camp: Baseline | Attacking Test in Scotland</span></div>
<div class="row" style="left:218.75px;top:910.40px;width:825.25px"><span class="c med" style="left:56.75px;top:.7px;color:#111827;font-size:11.500px">5 m</span><span class="c" style="left:148.95px">228<span class="u">w</span></span><span class="c" style="left:234.45px">2.72<span class="u">w/kg</span></span><svg class="abs" style="left:301.54999999999995px;top:9.1px" width="10.500" height="9.400" viewBox="0 0 20 20" preserveAspectRatio="none"><path d="M1.500 1.500h17L11.500 12h7l-2.300 6.500H1L8.500 8H3.500L1.500 1.500Z" fill="#d6762c"/></svg><span class="l link med" style="left:315.04999999999995px;top:.6px;font-size:10.700px;letter-spacing:.3px">Triple Twist in Watopia</span></div>
<div class="row" style="left:218.75px;top:938.60px;width:825.25px"><span class="c med" style="left:56.75px;top:.7px;color:#111827;font-size:11.500px">8 m</span><span class="c" style="left:148.95px">214<span class="u">w</span></span><span class="c" style="left:234.45px">2.55<span class="u">w/kg</span></span><svg class="abs" style="left:301.54999999999995px;top:9.1px" width="10.500" height="9.400" viewBox="0 0 20 20" preserveAspectRatio="none"><path d="M1.500 1.500h17L11.500 12h7l-2.300 6.500H1L8.500 8H3.500L1.500 1.500Z" fill="#d6762c"/></svg><span class="l link med" style="left:315.04999999999995px;top:.6px;font-size:10.700px;letter-spacing:.3px">Mayan 8 in Watopia</span></div>
<div class="row" style="left:218.75px;top:966.80px;width:825.25px"><span class="c med" style="left:56.75px;top:.7px;color:#111827;font-size:11.500px">20 m</span><span class="c" style="left:148.95px">204<span class="u">w</span></span><span class="c" style="left:234.45px">2.43<span class="u">w/kg</span></span><svg class="abs" style="left:301.54999999999995px;top:9.1px" width="10.500" height="9.400" viewBox="0 0 20 20" preserveAspectRatio="none"><path d="M1.500 1.500h17L11.500 12h7l-2.300 6.500H1L8.500 8H3.500L1.500 1.500Z" fill="#d6762c"/></svg><span class="l link med" style="left:315.04999999999995px;top:.6px;font-size:10.700px;letter-spacing:.3px">Elevation Evaluation in Watopia</span></div>
<div class="card" style="left:1067.8px;top:706.25px;width:849.2px;height:320px"></div>
<div class="h2" style="left:1081px;top:720.700px">Heart rate zones</div>
<svg class="abs" style="left:0;top:0" width="1920" height="992" viewBox="0 0 1920 992" font-family="Liberation Sans, sans-serif">
<path d="M1493.07 873.75L1493.07 783.35A90.4 90.4 0 0 1 1506.93 784.42Z" fill="#c26d58" stroke="#fff" stroke-width="1.500" stroke-linejoin="round"/>
<path d="M1493.07 873.75L1506.93 784.42A90.4 90.4 0 0 1 1546.80 801.05Z" fill="#b5552e" stroke="#fff" stroke-width="1.500" stroke-linejoin="round"/>
<path d="M1493.07 873.75L1546.80 801.05A90.4 90.4 0 0 1 1573.67 914.69Z" fill="#9d482d" stroke="#fff" stroke-width="1.500" stroke-linejoin="round"/>
<path d="M1493.07 873.75L1573.67 914.69A90.4 90.4 0 0 1 1406.00 898.04Z" fill="#7b3625" stroke="#fff" stroke-width="1.500" stroke-linejoin="round"/>
<path d="M1493.07 873.75L1406.00 898.04A90.4 90.4 0 0 1 1493.07 783.35Z" fill="#5a2113" stroke="#fff" stroke-width="1.500" stroke-linejoin="round"/>
<polyline points="1500.0,783.2 1500.9,771.2 1513.2,771.2" fill="none" stroke="#c26d58" stroke-width="1"/>
<text x="1516.1" y="768.6" font-size="9.150" font-weight="bold" fill="#222" text-anchor="start">Zone 1 (recovery)</text>
<text x="1516.1" y="780.1" font-size="9.150" fill="#444" text-anchor="start">2.45%</text>
<polyline points="1529.5,790.5 1556.3,796.0 1567.6,796.0" fill="none" stroke="#b5552e" stroke-width="1"/>
<text x="1571.6" y="793.4" font-size="9.150" font-weight="bold" fill="#222" text-anchor="start">Zone 2 (aerobic)</text>
<text x="1571.6" y="804.9" font-size="9.150" fill="#444" text-anchor="start">7.68%</text>
<polyline points="1581.6,852.6 1590.0,850.3 1600.9,850.3" fill="none" stroke="#9d482d" stroke-width="1"/>
<text x="1604.6" y="847.7" font-size="9.150" font-weight="bold" fill="#222" text-anchor="start">Zone 3 (aerobic/anaerobic)</text>
<text x="1604.6" y="859.2" font-size="9.150" fill="#444" text-anchor="start">22.35%</text>
<polyline points="1484.1,963.9 1483.0,976.0 1471.6,976.0" fill="none" stroke="#7b3625" stroke-width="1"/>
<text x="1467.3" y="973.4" font-size="9.150" font-weight="bold" fill="#222" text-anchor="end">Zone 4 (anaerobic)</text>
<text x="1467.3" y="984.9" font-size="9.150" fill="#444" text-anchor="end">38.19%</text>
<polyline points="1421.1,819.0 1411.6,811.6 1400.3,811.6" fill="none" stroke="#5a2113" stroke-width="1"/>
<text x="1395.6" y="809.0" font-size="9.150" font-weight="bold" fill="#222" text-anchor="end">Zone 5 (maximal)</text>
<text x="1395.6" y="820.5" font-size="9.150" fill="#444" text-anchor="end">29.33%</text>
</svg>
</body></html>
